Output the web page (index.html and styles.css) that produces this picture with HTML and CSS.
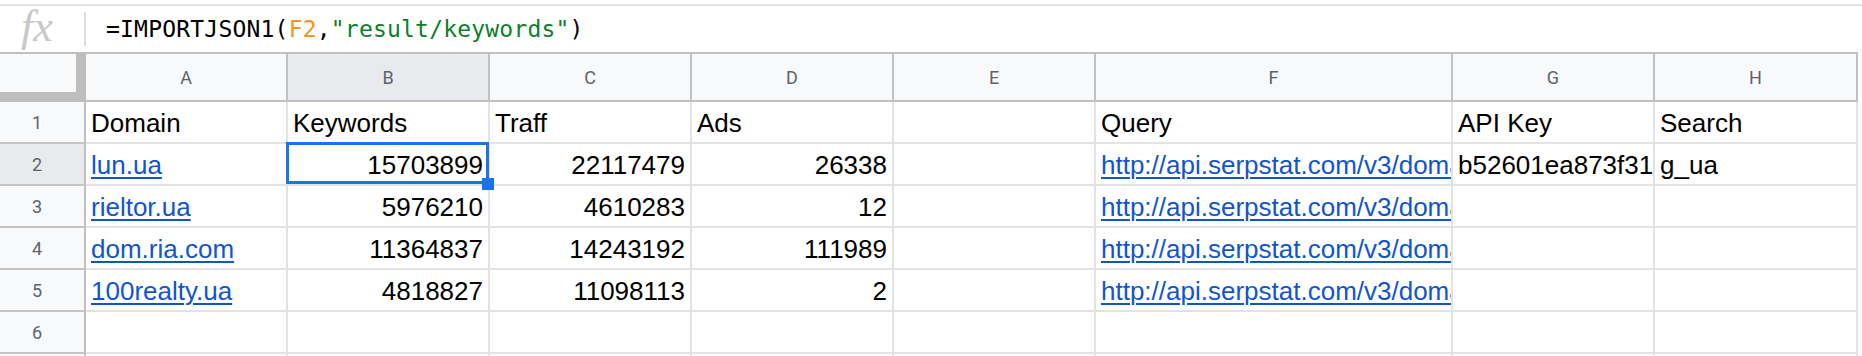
FILE: index.html
```html
<!DOCTYPE html>
<html>
<head>
<meta charset="utf-8">
<link rel="stylesheet" href="styles.css">
</head>
<body>
<div class="fbar">
  <div class="fx">fx</div>
  <div class="sep"></div>
  <div class="formula">=IMPORTJSON1(<span class="ref">F2</span>,<span class="str">"result/keywords"</span>)</div>
</div>
<div class="sheet">
  <div class="corner"></div>
  <div class="ch">A</div>
  <div class="ch sel">B</div>
  <div class="ch">C</div>
  <div class="ch">D</div>
  <div class="ch">E</div>
  <div class="ch">F</div>
  <div class="ch">G</div>
  <div class="ch">H</div>

  <div class="rh">1</div>
  <div class="c">Domain</div>
  <div class="c">Keywords</div>
  <div class="c">Traff</div>
  <div class="c">Ads</div>
  <div class="c"></div>
  <div class="c">Query</div>
  <div class="c">API Key</div>
  <div class="c">Search</div>

  <div class="rh sel">2</div>
  <div class="c"><a class="link">lun.ua</a></div>
  <div class="c num active">15703899<div class="selbox"></div><div class="handle"></div></div>
  <div class="c num">22117479</div>
  <div class="c num">26338</div>
  <div class="c"></div>
  <div class="c"><a class="link">http://api.serpstat.com/v3/domain/info</a></div>
  <div class="c">b52601ea873f31</div>
  <div class="c">g_ua</div>

  <div class="rh">3</div>
  <div class="c"><a class="link">rieltor.ua</a></div>
  <div class="c num">5976210</div>
  <div class="c num">4610283</div>
  <div class="c num">12</div>
  <div class="c"></div>
  <div class="c"><a class="link">http://api.serpstat.com/v3/domain/info</a></div>
  <div class="c"></div>
  <div class="c"></div>

  <div class="rh">4</div>
  <div class="c"><a class="link">dom.ria.com</a></div>
  <div class="c num">11364837</div>
  <div class="c num">14243192</div>
  <div class="c num">111989</div>
  <div class="c"></div>
  <div class="c"><a class="link">http://api.serpstat.com/v3/domain/info</a></div>
  <div class="c"></div>
  <div class="c"></div>

  <div class="rh">5</div>
  <div class="c"><a class="link">100realty.ua</a></div>
  <div class="c num">4818827</div>
  <div class="c num">11098113</div>
  <div class="c num">2</div>
  <div class="c"></div>
  <div class="c"><a class="link">http://api.serpstat.com/v3/domain/info</a></div>
  <div class="c"></div>
  <div class="c"></div>

  <div class="rh">6</div>
  <div class="c"></div>
  <div class="c"></div>
  <div class="c"></div>
  <div class="c"></div>
  <div class="c"></div>
  <div class="c"></div>
  <div class="c"></div>
  <div class="c"></div>

  <div class="rh">7</div>
  <div class="c"></div>
  <div class="c"></div>
  <div class="c"></div>
  <div class="c"></div>
  <div class="c"></div>
  <div class="c"></div>
  <div class="c"></div>
  <div class="c"></div>
</div>
</body>
</html>
```
FILE: styles.css
```css
html, body {
  margin: 0;
  padding: 0;
  background: #ffffff;
  overflow: hidden;
}
body {
  width: 1862px;
  height: 356px;
}
.fbar {
  margin-top: 4px;
  height: 48px;
  box-sizing: border-box;
  border-top: 2px solid #e3e3e3;
  display: flex;
  align-items: center;
}
.fx {
  width: 84px;
  box-sizing: border-box;
  padding-left: 21px;
  font-family: "Liberation Serif", serif;
  font-style: italic;
  font-size: 44px;
  line-height: 40px;
  color: #c8c8c8;
  margin-top: -4px;
}
.sep {
  width: 2px;
  height: 34px;
  background: #dcdcdc;
}
.formula {
  padding-left: 20px;
  font-family: "DejaVu Sans Mono", monospace;
  font-size: 23px;
  letter-spacing: 0.2px;
  color: #000;
  line-height: 30px;
}
.ref { color: #f7931e; }
.str { color: #0d7f28; }

.sheet {
  display: grid;
  grid-template-columns: 86px 202px 202px 202px 202px 202px 357px 202px 203px;
  grid-template-rows: 50px repeat(7, 42px);
  width: 1858px;
}
.corner {
  background: #f8f9fa;
  border-top: 2px solid #c0c0c0;
  border-right: 10px solid #bdbdbd;
  border-bottom: 10px solid #bdbdbd;
  box-sizing: border-box;
}
.ch {
  background: #f8f9fa;
  border-top: 2px solid #c0c0c0;
  border-right: 2px solid #c0c0c0;
  border-bottom: 2px solid #c0c0c0;
  box-sizing: border-box;
  display: flex;
  align-items: center;
  justify-content: center;
  font-family: Roboto, "Liberation Sans", sans-serif;
  font-size: 18px;
  color: #5f6368;
}
.ch.sel, .rh.sel { background: #e8eaed; }
.rh {
  background: #f8f9fa;
  border-right: 2px solid #c0c0c0;
  border-bottom: 2px solid #c4c4c4;
  box-sizing: border-box;
  display: flex;
  align-items: center;
  justify-content: center;
  padding-right: 10px;
  font-family: Roboto, "Liberation Sans", sans-serif;
  font-size: 18px;
  color: #5f6368;
}
.c {
  border-right: 2px solid #e2e3e3;
  border-bottom: 2px solid #e2e3e3;
  box-sizing: border-box;
  display: flex;
  align-items: flex-end;
  padding: 0 5px 4px 5px;
  font-family: "Liberation Sans", Arial, sans-serif;
  font-size: 26px;
  line-height: 30px;
  color: #000;
  white-space: nowrap;
  overflow: hidden;
}
.num { justify-content: flex-end; }
.link {
  color: #1155cc;
  text-decoration: underline;
  text-decoration-thickness: 2px;
  text-underline-offset: 3px;
}
.active {
  position: relative;
  overflow: visible;
}
.selbox {
  position: absolute;
  left: -2px;
  top: -2px;
  width: 203px;
  height: 42px;
  box-sizing: border-box;
  border: 3px solid #1a73e8;
}
.handle {
  position: absolute;
  left: 194px;
  top: 34px;
  width: 12px;
  height: 12px;
  background: #1a73e8;
}
```
